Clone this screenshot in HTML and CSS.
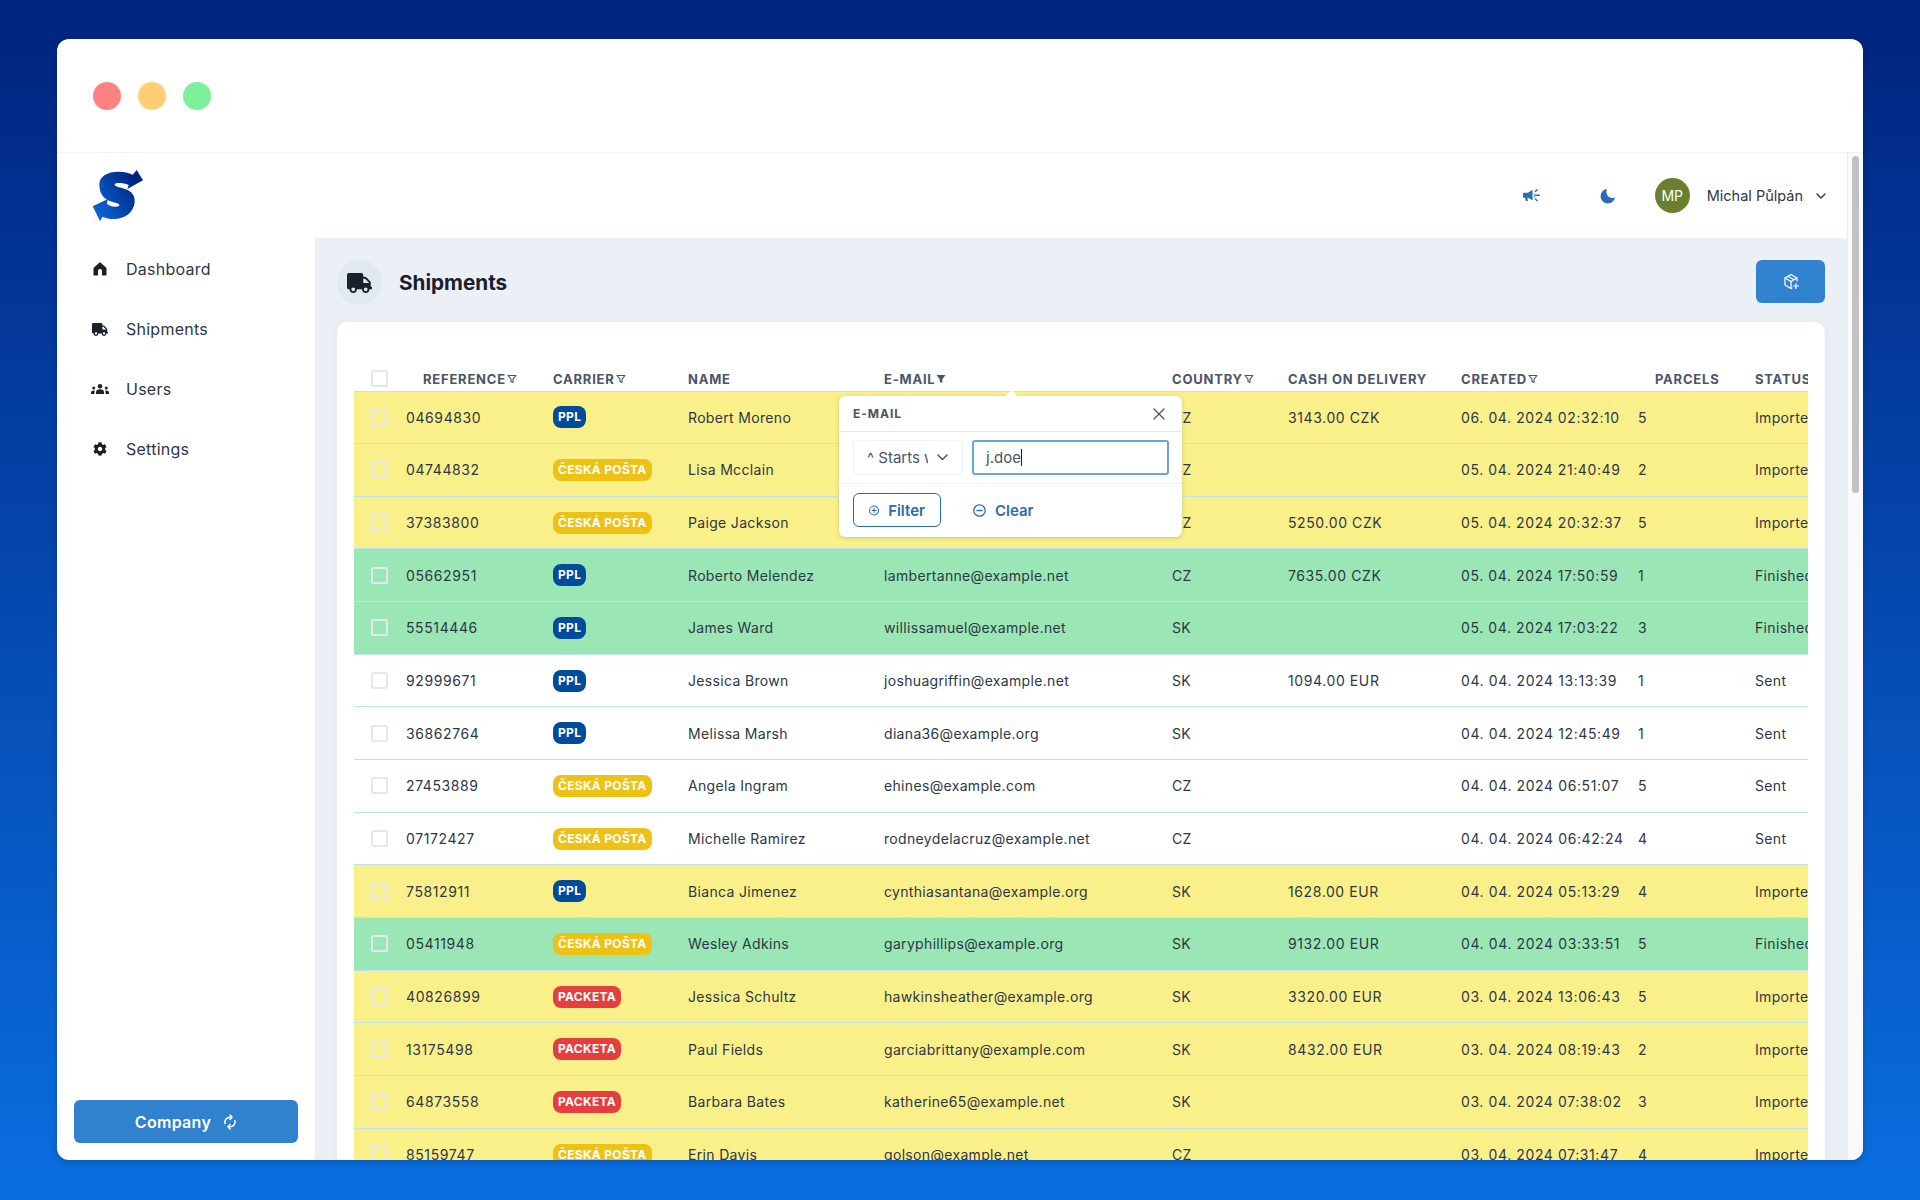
FILE: index.html
```html
<!DOCTYPE html>
<html lang="en">
<head>
    <meta charset="UTF-8">
    <title>Shipments</title>
    <link rel="stylesheet" href="styles.css">
</head>
<body>
    <svg class="defs" width="0" height="0">
        <defs>
            <symbol id="truck" viewBox="0 0 640 512"><path d="M624 352h-16V243.9c0-12.7-5.1-24.9-14.1-33.9L494 110.1c-9-9-21.2-14.1-33.9-14.1H416V48c0-26.5-21.5-48-48-48H48C21.5 0 0 21.5 0 48v320c0 26.5 21.5 48 48 48h16c0 53 43 96 96 96s96-43 96-96h128c0 53 43 96 96 96s96-43 96-96h48c8.8 0 16-7.2 16-16v-32c0-8.8-7.2-16-16-16zM160 464c-26.5 0-48-21.5-48-48s21.5-48 48-48 48 21.5 48 48-21.5 48-48 48zm320 0c-26.5 0-48-21.5-48-48s21.5-48 48-48 48 21.5 48 48-21.5 48-48 48zm80-208H416V144h44.1l99.9 99.9V256z"/></symbol>
            <symbol id="funnel" viewBox="0 0 10 10"><path d="M1 1.5h8L6 5.2V8.6L4 7.6V5.2z" fill="none" stroke="currentColor" stroke-width="1.1" stroke-linejoin="round"/></symbol>
            <linearGradient id="logoGrad" x1="0" y1="1" x2="1" y2="0.4">
                <stop offset="0" stop-color="#0a6ee0"/>
                <stop offset="1" stop-color="#00237f"/>
            </linearGradient>
        </defs>
    </svg>

    <div class="window">
        <div class="titlebar">
            <span class="dot dot-red"></span>
            <span class="dot dot-yellow"></span>
            <span class="dot dot-green"></span>
        </div>

        <div class="app">
            <aside class="sidebar">
                <div class="logo">
                    <svg width="60" height="60" viewBox="0 0 180 180"><path fill="url(#logoGrad)" d="M34 58C34 34 58 20 92 20C108 20 122 23 134 29L146 15L165 46L118 72L122 60C112 56 102 54 92 54C84 54 80 56 80 59C80 63 88 65 102 69C128 76 142 88 140 112C137 144 110 162 78 162C64 162 54 160 44 155L36 168L14 124L60 102L56 116C64 122 72 125 82 125C90 125 94 123 94 120C94 116 88 115 74 111C48 104 34 88 34 58Z"/></svg>
                </div>
                <nav class="nav">
                    <a class="nav-item" href="#">
                        <span class="nav-icon"><svg width="14" height="14" viewBox="0 0 14 14"><path d="M7 .5c.4 0 .7.1 1 .4l5 4.5c.3.3.5.6.5 1v6.100c0 .6-.4 1-1 1H9.500c-.3 0-.5-.2-.5-.5V9c0-1.100-.9-2-2-2s-2 .9-2 2v4c0 .3-.2.500-.5.500H1.500c-.6 0-1-.4-1-1V6.400c0-.4.2-.7.5-1L6 .9c.3-.3.600-.4 1-.4z"/></svg></span>
                        Dashboard
                    </a>
                    <a class="nav-item" href="#">
                        <span class="nav-icon"><svg width="16" height="13" viewBox="0 0 640 512"><use href="#truck"/></svg></span>
                        Shipments
                    </a>
                    <a class="nav-item" href="#">
                        <span class="nav-icon"><svg width="18" height="10" viewBox="0 0 36 20"><circle cx="18" cy="4.500" r="4.500"/><path d="M10 20v-3.500C10 12.500 13 10.500 18 10.500s8 2 8 6V20z"/><circle cx="5.500" cy="8" r="3"/><path d="M0 20v-2.500C0 14.500 2.500 12.800 5.500 12.800c1 0 1.500.2 2.200.4-.5 1-.7 2-.7 3.300V20z"/><circle cx="30.500" cy="8" r="3"/><path d="M36 20v-2.500c0-3-2.500-4.700-5.500-4.700-1 0-1.500.2-2.200.4.500 1 .7 2 .7 3.300V20z"/></svg></span>
                        Users
                    </a>
                    <a class="nav-item" href="#">
                        <span class="nav-icon"><svg width="14" height="14" viewBox="0 0 512 512"><path d="M487.400 315.700l-42.600-24.600c4.300-23.200 4.300-47 0-70.200l42.600-24.600c4.900-2.800 7.100-8.600 5.500-14-11.100-35.600-30-67.800-54.700-94.600-3.800-4.100-10-5.100-14.800-2.300L380.800 110c-17.900-15.400-38.500-27.300-60.800-35.100V25.800c0-5.600-3.900-10.500-9.400-11.700-36.700-8.200-74.300-7.800-109.200 0-5.500 1.200-9.400 6.100-9.400 11.700V75c-22.200 7.900-42.800 19.800-60.800 35.100L88.700 85.500c-4.900-2.800-11-1.900-14.800 2.300-24.700 26.700-43.600 58.900-54.700 94.600-1.700 5.400.6 11.200 5.500 14L67.300 221c-4.300 23.200-4.300 47 0 70.200l-42.600 24.600c-4.900 2.800-7.100 8.600-5.500 14 11.100 35.600 30 67.800 54.700 94.600 3.800 4.100 10 5.100 14.800 2.300l42.600-24.600c17.900 15.400 38.500 27.300 60.800 35.100v49.200c0 5.600 3.900 10.500 9.400 11.700 36.700 8.200 74.300 7.800 109.200 0 5.500-1.200 9.400-6.100 9.400-11.700v-49.200c22.200-7.900 42.800-19.800 60.800-35.100l42.600 24.600c4.900 2.800 11 1.900 14.800-2.300 24.700-26.700 43.600-58.900 54.700-94.600 1.500-5.500-.7-11.300-5.600-14.100zM256 336c-44.100 0-80-35.900-80-80s35.900-80 80-80 80 35.900 80 80-35.900 80-80 80z"/></svg></span>
                        Settings
                    </a>
                </nav>
                <button class="company-btn">
                    Company
                    <svg width="14" height="16" viewBox="0 0 14 16" fill="none" stroke="#fff" stroke-width="1.500" stroke-linecap="round" stroke-linejoin="round"><path d="M2 9.500C1.300 6 3.800 3.200 7 3.200h1.500"/><path d="M7 1l2 2.200L7 5.400"/><path d="M12 6.500c.7 3.500-1.800 6.300-5 6.300H5.500"/><path d="M7 10.600l-2 2.200 2 2.200"/></svg>
                </button>
            </aside>

            <div class="main">
                <header class="topbar">
                    <svg class="top-icon icon-horn" width="17" height="15" viewBox="0 0 17 15" fill="#2b6cb0"><path d="M0 5.500c0-.4.300-.7.700-.7H5L9.600 1.800v10.400L5 9.700H4.300l.7 3.300H2.800L2 9.700H.7C.3 9.700 0 9.400 0 9z"/><path d="M11.400 5.200v4.200c.9-.3 1.300-1.200 1.300-2.100s-.4-1.800-1.300-2.100z" /><path d="M12.300 3.400l2-1.700M13.600 7.200h2.800M12.300 11l2 1.700" stroke="#2b6cb0" stroke-width="1.400" stroke-linecap="round"/></svg>
                    <svg class="top-icon icon-moon" width="16" height="16" viewBox="0 0 16 16" fill="#2b6cb0"><path d="M6.800.9C3.300 1.400.6 4.500.6 8.200c0 4 3.300 7.200 7.300 7.200 3.500 0 6.500-2.500 7.100-5.900-.7.300-1.500.5-2.400.5-3.500 0-6.200-2.700-6.200-6.200 0-1.100.3-2 .4-2.900z"/></svg>
                    <span class="avatar">MP</span>
                    <span class="user-name">Michal Půlpán</span>
                    <svg class="user-chevron" width="10" height="6" viewBox="0 0 10 6" fill="none" stroke="#2d3748" stroke-width="1.400" stroke-linecap="round" stroke-linejoin="round"><path d="M1 1l4 4 4-4"/></svg>
                </header>

                <main class="page">
                    <div class="page-head">
                        <span class="head-icon"><svg width="25" height="20" viewBox="0 0 640 512"><use href="#truck"/></svg></span>
                        <h1>Shipments</h1>
                        <button class="new-btn">
                            <svg width="16" height="17" viewBox="0 0 16 17" fill="none" stroke="#fff" stroke-width="1.200" stroke-linecap="round" stroke-linejoin="round"><path d="M14 8V5L8 1.500 2 5v7l6 3.500 1-.6"/><path d="M2 5l6 3.500L14 5M8 8.500v7M5 3.200l6 3.500"/><path d="M10.500 13h5M13 10.500v5"/></svg>
                        </button>
                    </div>

                    <section class="card">
                        <div class="table-wrap">
                            <table class="shipments">
                                <colgroup>
                                    <col class="c-check"><col class="c-ref"><col class="c-carrier"><col class="c-name"><col class="c-email"><col class="c-country"><col class="c-cash"><col class="c-created"><col class="c-parcels"><col class="c-status">
                                </colgroup>
                                <thead>
                                    <tr>
                                        <th class="check"><span class="box"></span></th>
                                        <th class="indent">Reference<svg class="funnel" width="10" height="10"><use href="#funnel"/></svg></th>
                                        <th>Carrier<svg class="funnel" width="10" height="10"><use href="#funnel"/></svg></th>
                                        <th>Name</th>
                                        <th>E-mail<svg class="funnel" width="10" height="10" viewBox="0 0 10 10"><path d="M.5 1h9L6.300 5.200V9L3.700 7.700V5.200z" fill="currentColor"/></svg></th>
                                        <th>Country<svg class="funnel" width="10" height="10"><use href="#funnel"/></svg></th>
                                        <th>Cash on delivery</th>
                                        <th>Created<svg class="funnel" width="10" height="10"><use href="#funnel"/></svg></th>
                                        <th class="indent">Parcels</th>
                                        <th>Status</th>
                                    </tr>
                                </thead>
                                <tbody>
                                    <tr class="imported"><td class="check"><span class="box"></span></td><td>04694830</td><td><span class="badge ppl">PPL</span></td><td>Robert Moreno</td><td></td><td>CZ</td><td>3143.00 CZK</td><td>06. 04. 2024 02:32:10</td><td>5</td><td>Imported</td></tr>
                                    <tr class="imported"><td class="check"><span class="box"></span></td><td>04744832</td><td><span class="badge posta">ČESKÁ POŠTA</span></td><td>Lisa Mcclain</td><td></td><td>CZ</td><td></td><td>05. 04. 2024 21:40:49</td><td>2</td><td>Imported</td></tr>
                                    <tr class="imported"><td class="check"><span class="box"></span></td><td>37383800</td><td><span class="badge posta">ČESKÁ POŠTA</span></td><td>Paige Jackson</td><td></td><td>CZ</td><td>5250.00 CZK</td><td>05. 04. 2024 20:32:37</td><td>5</td><td>Imported</td></tr>
                                    <tr class="finished"><td class="check"><span class="box"></span></td><td>05662951</td><td><span class="badge ppl">PPL</span></td><td>Roberto Melendez</td><td>lambertanne@example.net</td><td>CZ</td><td>7635.00 CZK</td><td>05. 04. 2024 17:50:59</td><td>1</td><td>Finished</td></tr>
                                    <tr class="finished"><td class="check"><span class="box"></span></td><td>55514446</td><td><span class="badge ppl">PPL</span></td><td>James Ward</td><td>willissamuel@example.net</td><td>SK</td><td></td><td>05. 04. 2024 17:03:22</td><td>3</td><td>Finished</td></tr>
                                    <tr><td class="check"><span class="box"></span></td><td>92999671</td><td><span class="badge ppl">PPL</span></td><td>Jessica Brown</td><td>joshuagriffin@example.net</td><td>SK</td><td>1094.00 EUR</td><td>04. 04. 2024 13:13:39</td><td>1</td><td>Sent</td></tr>
                                    <tr><td class="check"><span class="box"></span></td><td>36862764</td><td><span class="badge ppl">PPL</span></td><td>Melissa Marsh</td><td>diana36@example.org</td><td>SK</td><td></td><td>04. 04. 2024 12:45:49</td><td>1</td><td>Sent</td></tr>
                                    <tr><td class="check"><span class="box"></span></td><td>27453889</td><td><span class="badge posta">ČESKÁ POŠTA</span></td><td>Angela Ingram</td><td>ehines@example.com</td><td>CZ</td><td></td><td>04. 04. 2024 06:51:07</td><td>5</td><td>Sent</td></tr>
                                    <tr><td class="check"><span class="box"></span></td><td>07172427</td><td><span class="badge posta">ČESKÁ POŠTA</span></td><td>Michelle Ramirez</td><td>rodneydelacruz@example.net</td><td>CZ</td><td></td><td>04. 04. 2024 06:42:24</td><td>4</td><td>Sent</td></tr>
                                    <tr class="imported"><td class="check"><span class="box"></span></td><td>75812911</td><td><span class="badge ppl">PPL</span></td><td>Bianca Jimenez</td><td>cynthiasantana@example.org</td><td>SK</td><td>1628.00 EUR</td><td>04. 04. 2024 05:13:29</td><td>4</td><td>Imported</td></tr>
                                    <tr class="finished"><td class="check"><span class="box"></span></td><td>05411948</td><td><span class="badge posta">ČESKÁ POŠTA</span></td><td>Wesley Adkins</td><td>garyphillips@example.org</td><td>SK</td><td>9132.00 EUR</td><td>04. 04. 2024 03:33:51</td><td>5</td><td>Finished</td></tr>
                                    <tr class="imported"><td class="check"><span class="box"></span></td><td>40826899</td><td><span class="badge packeta">PACKETA</span></td><td>Jessica Schultz</td><td>hawkinsheather@example.org</td><td>SK</td><td>3320.00 EUR</td><td>03. 04. 2024 13:06:43</td><td>5</td><td>Imported</td></tr>
                                    <tr class="imported"><td class="check"><span class="box"></span></td><td>13175498</td><td><span class="badge packeta">PACKETA</span></td><td>Paul Fields</td><td>garciabrittany@example.com</td><td>SK</td><td>8432.00 EUR</td><td>03. 04. 2024 08:19:43</td><td>2</td><td>Imported</td></tr>
                                    <tr class="imported"><td class="check"><span class="box"></span></td><td>64873558</td><td><span class="badge packeta">PACKETA</span></td><td>Barbara Bates</td><td>katherine65@example.net</td><td>SK</td><td></td><td>03. 04. 2024 07:38:02</td><td>3</td><td>Imported</td></tr>
                                    <tr class="imported"><td class="check"><span class="box"></span></td><td>85159747</td><td><span class="badge posta">ČESKÁ POŠTA</span></td><td>Erin Davis</td><td>golson@example.net</td><td>CZ</td><td></td><td>03. 04. 2024 07:31:47</td><td>4</td><td>Imported</td></tr>
                                </tbody>
                            </table>
                        </div>

                        <!-- filter popover for the e-mail column -->
                        <div class="popover">
                            <span class="popover-arrow"></span>
                            <div class="popover-head">
                                <span>E-mail</span>
                                <svg width="12" height="12" viewBox="0 0 12 12" stroke="#4a5568" stroke-width="1.300" stroke-linecap="round"><path d="M1 1l10 10M11 1L1 11"/></svg>
                            </div>
                            <div class="popover-fields">
                                <div class="select">
                                    <span class="select-text">^ Starts with</span>
                                    <svg width="11" height="7" viewBox="0 0 11 7" fill="none" stroke="#4a5568" stroke-width="1.500" stroke-linecap="round" stroke-linejoin="round"><path d="M1 1l4.500 4.500L10 1"/></svg>
                                </div>
                                <div class="input">j.doe<span class="caret"></span></div>
                            </div>
                            <div class="popover-actions">
                                <button class="filter-btn">
                                    <svg width="13" height="13" viewBox="0 0 13 13" fill="none" stroke="#2b6cb0" stroke-width="1.300" stroke-linecap="round"><circle cx="6.500" cy="6.500" r="5.700"/><path d="M6.500 4v5M4 6.500h5"/></svg>
                                    Filter
                                </button>
                                <button class="clear-btn">
                                    <svg width="13" height="13" viewBox="0 0 13 13" fill="none" stroke="#2b6cb0" stroke-width="1.300" stroke-linecap="round"><circle cx="6.500" cy="6.500" r="5.700"/><path d="M4 6.500h5"/></svg>
                                    Clear
                                </button>
                            </div>
                        </div>
                    </section>
                </main>
            </div>

            <div class="scrollbar"><span class="thumb"></span></div>
        </div>
    </div>
</body>
</html>
```

FILE: styles.css
```css
* {
    box-sizing: border-box;
}

html,
body {
    height: 100%;
}

body {
    margin: 0;
    padding: 39px 57px 40px 57px;
    font-family: 'Inter', 'Liberation Sans', sans-serif;
    color: #2d3748;
    background: linear-gradient(180deg, #00237f 0%, #0a6ee0 100%);
    overflow: hidden;
}

.defs {
    position: absolute;
}

button {
    font-family: inherit;
    cursor: pointer;
}

.window {
    display: flex;
    flex-direction: column;
    height: 1121px;
    background: #fff;
    border-radius: 12px;
    overflow: hidden;
    box-shadow: 0 2px 6px rgba(0, 0, 0, 0.2);
}

.titlebar {
    flex: none;
    display: flex;
    align-items: center;
    gap: 17px;
    height: 114px;
    padding-left: 36px;
    border-bottom: 1px solid #edf2f7;
}

.dot {
    width: 28px;
    height: 28px;
    border-radius: 50%;
}

.dot-red {
    background: #ff8282;
}

.dot-yellow {
    background: #ffcd74;
}

.dot-green {
    background: #7cf09a;
}

.app {
    flex: 1;
    display: flex;
    min-height: 0;
}

/* Sidebar */
.sidebar {
    flex: none;
    width: 258px;
    display: flex;
    flex-direction: column;
    padding: 0 17px 17px;
}

.logo {
    height: 86px;
    padding-top: 12px;
    margin-left: 14px;
}

.nav {
    flex: 1;
    margin: 0 -17px;
}

.nav-item {
    display: flex;
    align-items: center;
    height: 60px;
    padding-left: 34px;
    font-size: 16px;
    letter-spacing: 0.25px;
    color: #2d3748;
    text-decoration: none;
}

.nav-icon {
    display: flex;
    justify-content: center;
    align-items: center;
    width: 18px;
    margin-right: 17px;
}

.nav-icon svg {
    fill: #1a202c;
}

.company-btn {
    display: flex;
    align-items: center;
    justify-content: center;
    gap: 12px;
    height: 43px;
    border: none;
    border-radius: 6px;
    background: #3182ce;
    color: #fff;
    font-size: 16px;
    font-weight: 600;
    letter-spacing: 0.3px;
}

/* Main column */
.main {
    flex: 1;
    min-width: 0;
    display: flex;
    flex-direction: column;
}

.topbar {
    flex: none;
    display: flex;
    align-items: center;
    height: 85px;
    padding-right: 21px;
}

.icon-horn {
    margin-left: auto;
}

.icon-moon {
    margin-left: 60px;
}

.avatar {
    display: flex;
    align-items: center;
    justify-content: center;
    width: 35px;
    height: 35px;
    margin-left: 39px;
    border-radius: 50%;
    background: #6a802f;
    color: #fff;
    font-size: 14px;
}

.user-name {
    margin-left: 17px;
    font-size: 14.5px;
    color: #2d3748;
}

.user-chevron {
    margin-left: 13px;
}

.page {
    flex: 1;
    min-height: 0;
    padding: 22px 22px 0;
    background: #ebeff6;
    overflow: hidden;
}

.page-head {
    display: flex;
    align-items: center;
    height: 45px;
    margin-bottom: 17px;
}

.head-icon {
    display: flex;
    align-items: center;
    justify-content: center;
    width: 45px;
    height: 45px;
    border-radius: 50%;
    background: #e2e8f0;
}

.head-icon svg {
    fill: #1a202c;
}

h1 {
    margin: 0 0 0 17px;
    font-size: 20.7px;
    font-weight: 700;
    color: #1a202c;
}

.new-btn {
    display: flex;
    align-items: center;
    justify-content: center;
    width: 69px;
    height: 43px;
    margin: -2px 0 0 auto;
    border: none;
    border-radius: 6px;
    background: #3182ce;
}

/* Table card */
.card {
    position: relative;
    padding: 31px 17px 0;
    background: #fff;
    border-radius: 10px 10px 0 0;
    box-shadow: 0 2px 10px rgba(0, 0, 0, 0.05);
}

.table-wrap {
    overflow: hidden;
}

.shipments {
    width: 1574px;
    table-layout: fixed;
    border-collapse: collapse;
}

.c-check { width: 52px; }
.c-ref { width: 147px; }
.c-carrier { width: 135px; }
.c-name { width: 196px; }
.c-email { width: 288px; }
.c-country { width: 116px; }
.c-cash { width: 173px; }
.c-created { width: 177px; }
.c-parcels { width: 117px; }
.c-status { width: 173px; }

.shipments th {
    height: 38px;
    padding: 14px 0 0;
    text-align: left;
    font-size: 13px;
    font-weight: 700;
    letter-spacing: 0.06em;
    text-transform: uppercase;
    color: #4a5568;
    border-bottom: 1px solid #bee3f8;
}

.shipments th.indent {
    padding-left: 17px;
}

.shipments td {
    height: 52.67px;
    padding: 0;
    font-size: 14px;
    letter-spacing: 0.33px;
    color: #2d3748;
    white-space: nowrap;
    border-bottom: 1px solid #bee3f8;
}

/* digits run wider than the letters: reference, cash, created */
.shipments td:nth-child(2),
.shipments td:nth-child(7),
.shipments td:nth-child(8) {
    letter-spacing: 0.6px;
}

.shipments .check {
    padding-left: 17px;
}

.funnel {
    margin-left: 1px;
    vertical-align: 0;
}

.imported {
    background: #faf089;
}

.finished {
    background: #9ae6b4;
}

.box {
    display: block;
    width: 17px;
    height: 17px;
    border: 2px solid #e2e8f0;
    border-radius: 2px;
}

.badge {
    display: inline-block;
    height: 22px;
    padding: 0 5px;
    border-radius: 8px;
    font-size: 12px;
    line-height: 22px;
    font-weight: 700;
    letter-spacing: 0.3px;
    color: #fff;
    vertical-align: middle;
}

.ppl {
    background: #004b9b;
}

.posta {
    background: #edc214;
}

.packeta {
    background: #e53e3e;
}

/* Filter popover */
.popover {
    position: absolute;
    top: 74px;
    left: 502px;
    width: 343px;
    height: 141px;
    background: #fff;
    border-radius: 6px;
    box-shadow: 0 1px 4px rgba(0, 0, 0, 0.18);
}

.popover-arrow {
    position: absolute;
    top: -4px;
    left: 168px;
    width: 9px;
    height: 9px;
    background: #fff;
    transform: rotate(45deg);
}

.popover-head {
    display: flex;
    align-items: center;
    justify-content: space-between;
    height: 36px;
    padding: 0 17px 0 14px;
    border-bottom: 1px solid #e2e8f0;
    font-size: 12px;
    font-weight: 700;
    letter-spacing: 0.08em;
    text-transform: uppercase;
    color: #4a5568;
}

.popover-fields {
    display: flex;
    gap: 9px;
    height: 52px;
    padding: 8px 13px 0 14px;
    border-bottom: 1px solid #edf2f7;
}

.select {
    display: flex;
    align-items: center;
    width: 110px;
    height: 35px;
    padding: 0 13px;
    border: 1px solid #edf2f7;
    border-radius: 3px;
    font-size: 15px;
    color: #4a5568;
}

.select-text {
    flex: none;
    width: 61px;
    margin-right: 9px;
    overflow: hidden;
    white-space: nowrap;
}

.input {
    flex: 1;
    display: flex;
    align-items: center;
    height: 35px;
    padding-left: 12px;
    border: 2px solid #6ba3dc;
    border-radius: 3px;
    font-size: 15px;
    color: #4a5568;
}

.caret {
    width: 1px;
    height: 17px;
    background: #1a202c;
}

.popover-actions {
    display: flex;
    align-items: center;
    height: 52px;
    padding: 0 14px;
}

.filter-btn,
.clear-btn {
    display: flex;
    align-items: center;
    gap: 9px;
    height: 34px;
    font-size: 15px;
    font-weight: 600;
    color: #2b6cb0;
    background: #fff;
}

.filter-btn {
    width: 88px;
    padding: 0 15px;
    border: 1px solid #2b6cb0;
    border-radius: 6px;
}

.clear-btn {
    margin-left: 32px;
    padding: 0;
    border: none;
}

/* Fake scrollbar of the window */
.scrollbar {
    flex: none;
    width: 16px;
    padding: 3px 4px 0 4px;
    background: #fafafa;
    border-left: 1px solid #eaecf2;
}

.thumb {
    display: block;
    height: 337px;
    border-radius: 4px;
    background: #c1c1c1;
}
```
